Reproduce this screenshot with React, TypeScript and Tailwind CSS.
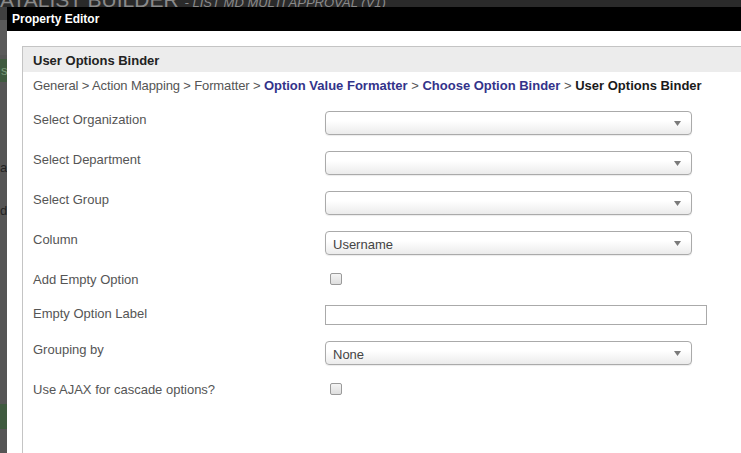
import React from 'react';

const font = { fontFamily: '"Liberation Sans", Arial, sans-serif' };

const Select = ({ value }: { value?: string }) => (
    <div className="w-[367px] h-[24px] rounded-[4px] border border-[#aaaaaa] bg-gradient-to-b from-white from-40% to-[#ebebeb] shadow-[0_1px_1px_rgba(0,0,0,0.08)] flex items-center justify-between pl-[7px] pr-[10px]">
        <span className="text-[13px] leading-[16px] text-[#444] pt-[3px]">{value}</span>
        <svg width="7" height="5" viewBox="0 0 7 5"><path d="M0 0 L7 0 L3.5 5 Z" fill="#7a7a7a"/></svg>
    </div>
);

const Checkbox = () => (
    <div className="ml-[5px] mt-[2px] w-[12px] h-[12px] rounded-[2px] border border-[#9a9a9a] bg-gradient-to-b from-[#f4f4f4] to-[#dedede]" />
);

const Row = ({ label, h, children }: { label: string; h: string; children: React.ReactNode }) => (
    <div className={`flex items-start ${h}`}>
        <div className="w-[292px] pt-[1px] text-[13px] leading-[16px] text-[#555]">{label}</div>
        {children}
    </div>
);

export default function App() {
    return (
        <div className="relative w-[741px] h-[453px] overflow-hidden bg-[#555555]" style={font}>
            {/* page behind the dialog */}
            <div className="flex flex-col h-full">
                <div className="h-[7px] bg-[#2a2a2a] overflow-hidden">
                    <div className="-mt-[16px] flex items-baseline gap-[6px] whitespace-nowrap text-[#8a8a8a]">
                        <span className="text-[21px]">ATALIST BUILDER</span>
                        <span className="text-[13px] italic">- LIST MD MULTI APPROVAL (V1)</span>
                    </div>
                </div>
                <div className="h-[13px] bg-[#404040]" />
                <div className="h-[35px] bg-[#5a5a5a]" />
                <div className="h-[4px] bg-[#555]" />
                <div className="h-[23px] bg-[#3f5a3f] text-[#7a9a7a] text-[13px] pl-[1px] leading-[23px]">s</div>
                <div className="h-[80px] bg-[#555]" />
                <div className="h-[12px] text-[#222] text-[13px] leading-[12px]">a</div>
                <div className="h-[30px]" />
                <div className="h-[14px] text-[#222] text-[13px] leading-[14px]">d</div>
                <div className="h-[186px]" />
                <div className="h-[25px] bg-[#3f5a3f]" />
            </div>

            {/* dialog */}
            <div className="absolute left-[7px] top-[7px] right-0 bottom-0 bg-white flex flex-col">
                <div className="h-[24px] bg-black text-white font-bold text-[12px] leading-[24px] pl-[5px]">Property Editor</div>
                <div className="flex-1 pt-[15px] pl-[15px]">
                    <div className="w-[760px] h-full border-l border-t border-[#c4c4c4]">
                        <div className="h-[25px] bg-[#ececec] pt-[6px] pl-[10px] text-[13px] leading-[16px] font-bold text-[#222]">User Options Binder</div>
                        <div className="pl-[10px] mt-[6px] text-[13px] leading-[16px] text-[#555] whitespace-nowrap">
                            <span className="tracking-[-0.13px]">General &gt; Action Mapping &gt; Formatter &gt; </span><span className="text-[#33338a] font-bold">Option Value Formatter</span> &gt; <span className="text-[#33338a] font-bold">Choose Option Binder</span> &gt; <span className="text-[#1a1a1a] font-bold">User Options Binder</span>
                        </div>
                        <div className="pl-[10px] mt-[17px] flex flex-col">
                            <Row label="Select Organization" h="h-[40px]"><Select /></Row>
                            <Row label="Select Department" h="h-[40px]"><Select /></Row>
                            <Row label="Select Group" h="h-[40px]"><Select /></Row>
                            <Row label="Column" h="h-[40px]"><Select value="Username" /></Row>
                            <Row label="Add Empty Option" h="h-[34px]"><Checkbox /></Row>
                            <Row label="Empty Option Label" h="h-[36px]">
                                <div className="w-[382px] h-[20px] border border-[#aaaaaa] bg-white" />
                            </Row>
                            <Row label="Grouping by" h="h-[40px]"><Select value="None" /></Row>
                            <Row label="Use AJAX for cascade options?" h="h-[40px]"><Checkbox /></Row>
                        </div>
                    </div>
                </div>
            </div>
        </div>
    );
}
